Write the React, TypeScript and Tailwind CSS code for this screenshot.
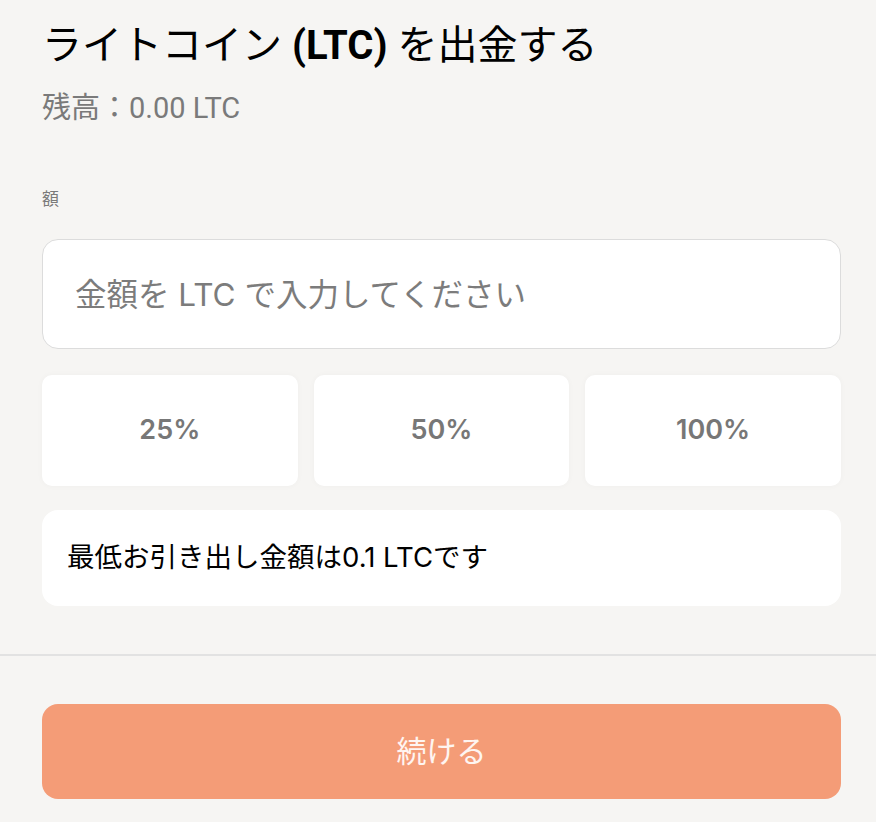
const font = "font-['Roboto','Noto_Sans_CJK_JP',sans-serif]";
const uiFont = "font-['Inter','Noto_Sans_CJK_JP',sans-serif]";

const presets = ["25%", "50%", "100%"];

export default function App() {
  return (
    <div className={`min-h-[822px] w-full bg-[#f6f5f3] ${font}`}>
      <div className="pl-[42px] pr-[35px] pt-[22px]">
        {/* Header */}
        <h1 className="text-[40px] leading-[48px] text-black">
          ライトコイン <span className="font-bold">(LTC)</span> を出金する
        </h1>
        <p className="mt-[22px] text-[29px] leading-[32px] text-[#7a7a7a]">残高：0.00 LTC</p>

        {/* Amount */}
        <label className="mt-[64px] block text-[17px] leading-[22px] text-[#7a7a7a]">額</label>
        <input
          type="text"
          placeholder="金額を LTC で入力してください"
          className={`mt-[29px] block h-[110px] w-full rounded-[16px] border border-[#dcdcdc] bg-white px-[32px] text-[31.5px] text-black outline-none placeholder:text-[#7c7c7c] ${uiFont}`}
        />

        <div className="mt-[26px] grid grid-cols-3 gap-[16px]">
          {presets.map((p) => (
            <button
              key={p}
              className={`flex h-[111px] items-center justify-center rounded-[10px] bg-white text-[27px] font-semibold text-[#777] shadow-[0_0_6px_rgba(0,0,0,0.03)] ${uiFont}`}
            >
              {p}
            </button>
          ))}
        </div>

        <div className={`mt-[24px] flex h-[96px] items-center rounded-[16px] bg-white px-[25px] text-[27.5px] text-black ${uiFont}`}>
          最低お引き出し金額は0.1 LTCです
        </div>
      </div>

      <div className="mt-[48px] h-[2px] w-full bg-[#e2e2e2]" />

      <div className="pl-[42px] pr-[35px] pt-[48px]">
        <button className={`flex h-[95px] w-full items-center justify-center rounded-[16px] bg-[#f49c77] text-[30px] text-white/90 ${uiFont}`}>
          続ける
        </button>
      </div>
    </div>
  );
}
